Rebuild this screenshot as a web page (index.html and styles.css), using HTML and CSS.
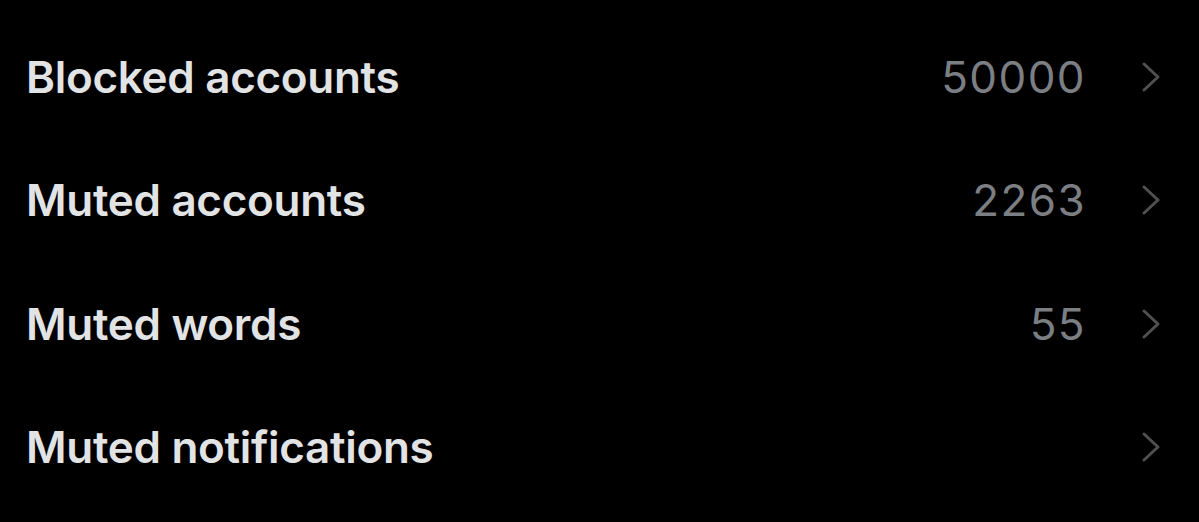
FILE: index.html
```html
<!DOCTYPE html>
<html lang="en">
<head>
<meta charset="utf-8">
<title>Mute and block</title>
<link rel="stylesheet" href="styles.css">
</head>
<body>
<ul class="settings">
  <li class="row">
    <span class="label">Blocked accounts</span>
    <span class="count">50000</span>
    <svg class="chevron" viewBox="0 0 20 32"><path d="M3 3l14 13-14 13"/></svg>
  </li>
  <li class="row">
    <span class="label">Muted accounts</span>
    <span class="count">2263</span>
    <svg class="chevron" viewBox="0 0 20 32"><path d="M3 3l14 13-14 13"/></svg>
  </li>
  <li class="row">
    <span class="label">Muted words</span>
    <span class="count">55</span>
    <svg class="chevron" viewBox="0 0 20 32"><path d="M3 3l14 13-14 13"/></svg>
  </li>
  <li class="row">
    <span class="label">Muted notifications</span>
    <span class="count"></span>
    <svg class="chevron" viewBox="0 0 20 32"><path d="M3 3l14 13-14 13"/></svg>
  </li>
</ul>
</body>
</html>
```

FILE: styles.css
```css
html, body {
  margin: 0;
  padding: 0;
  background: #000;
}

body {
  font-family: Inter, "Liberation Sans", Arial, sans-serif;
  width: 1199px;
  height: 522px;
  overflow: hidden;
}

.settings {
  list-style: none;
  margin: 0;
  padding: 15px 0 0 0;
}

.row {
  display: flex;
  align-items: center;
  height: 123.5px;
  padding: 0 38px 0 26px;
}

.label {
  flex: 1;
  font-size: 44px;
  font-weight: 630;
  letter-spacing: -0.3px;
  color: #e2e3e4;
}

.count {
  font-size: 44px;
  font-weight: 380;
  letter-spacing: 1.4px;
  color: #7b7e82;
  margin-right: 55px;
}

.chevron {
  width: 20px;
  height: 32px;
  fill: none;
  stroke: #505050;
  stroke-width: 3;
  stroke-linecap: round;
  stroke-linejoin: round;
}
```
